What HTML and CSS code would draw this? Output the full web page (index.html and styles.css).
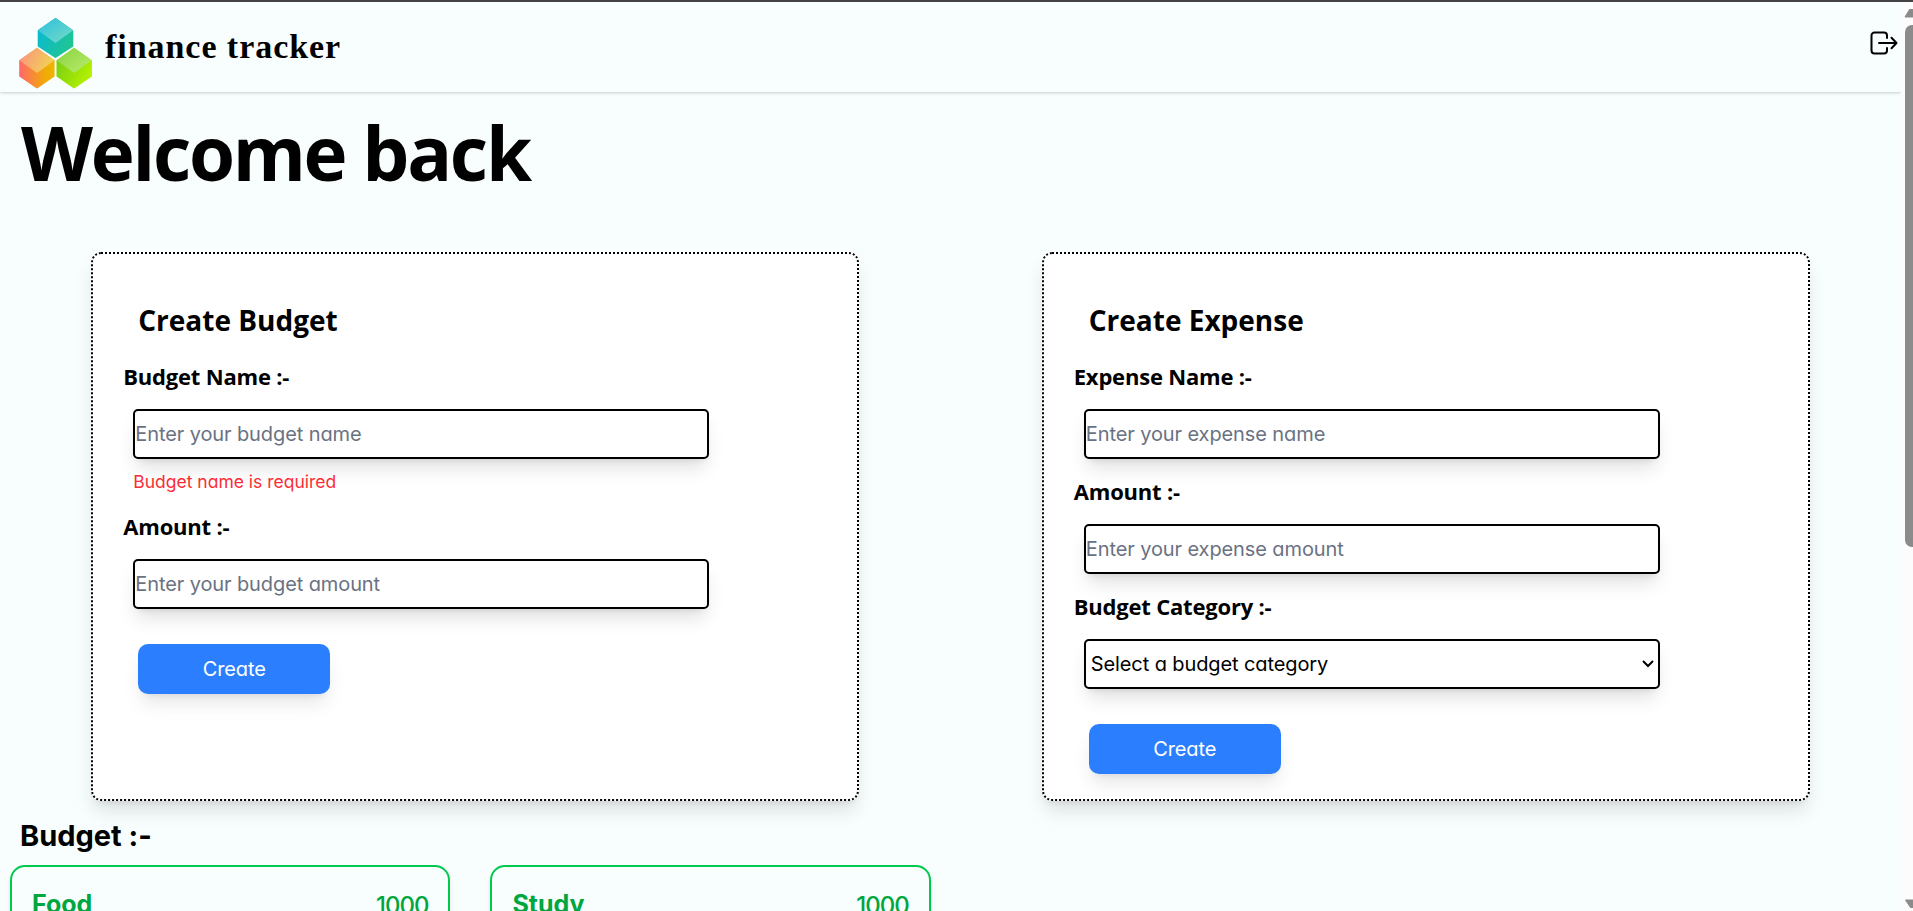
FILE: index.html
```html
<!DOCTYPE html>
<html lang="en">
<head>
<meta charset="utf-8">
<title>finance tracker</title>
<link rel="stylesheet" href="styles.css">
</head>
<body>
<div class="top-edge"></div>
<div class="viewport">
  <div class="page">
    <header class="navbar">
      <svg class="logo" viewBox="0 0 90 85" width="90" height="85">
        <defs>
          <linearGradient id="tealTop" x1="0" y1="0" x2="1" y2="1"><stop offset="0" stop-color="#2bbfe0"/><stop offset="1" stop-color="#78dcc4"/></linearGradient>
          <linearGradient id="teal" x1="0" y1="0" x2="1" y2="0.6"><stop offset="0" stop-color="#06b8dc"/><stop offset="1" stop-color="#20c593"/></linearGradient>
          <linearGradient id="orangeTop" x1="0" y1="0" x2="1" y2="0.4"><stop offset="0" stop-color="#fb8f83"/><stop offset="1" stop-color="#f2d055"/></linearGradient>
          <linearGradient id="orange" x1="0" y1="0" x2="1" y2="0"><stop offset="0" stop-color="#ff6a68"/><stop offset=".75" stop-color="#f0ab05"/><stop offset="1" stop-color="#efb400"/></linearGradient>
          <linearGradient id="limeTop" x1="0" y1="0" x2="1" y2="1"><stop offset="0" stop-color="#88d23f"/><stop offset="1" stop-color="#bced6e"/></linearGradient>
          <linearGradient id="lime" x1="0" y1="0" x2="1" y2="0.6"><stop offset="0" stop-color="#72c916"/><stop offset="1" stop-color="#b1f000"/></linearGradient>
        </defs>
        <g stroke-linejoin="round" stroke-width="2">
          <path d="M45.500 9L62.300 20.800V36L45.500 47L28.700 36V20.800Z" fill="url(#teal)" stroke="url(#teal)"/>
          <path d="M45.500 7.900L63.200 20.300L45.500 33L27.800 20.300Z" fill="url(#tealTop)"/>
          <path d="M27 39L43.600 50.800V66L27 77.300L10.200 66V50.800Z" fill="url(#orange)" stroke="url(#orange)"/>
          <path d="M27 37.900L44.500 50.300L27 63L9.300 50.300Z" fill="url(#orangeTop)"/>
          <path d="M64.100 39L80.900 50.800V66L64.100 77.300L47.500 66V50.800Z" fill="url(#lime)" stroke="url(#lime)"/>
          <path d="M64.100 37.900L81.800 50.300L64.100 63L46.600 50.300Z" fill="url(#limeTop)"/>
        </g>
      </svg>
      <span class="brand">finance tracker</span>
      <svg class="logout" viewBox="0 0 28 26" width="28" height="26" fill="none" stroke="#000" stroke-width="2" stroke-linecap="round" stroke-linejoin="round">
        <path d="M17 7V4.500a3 3 0 0 0-3-3H4.500a3 3 0 0 0-3 3v15a3 3 0 0 0 3 3h9.500a3 3 0 0 0 3-3V17"/>
        <path d="M9 12H26.500M21.500 6.800L26.500 12L21.500 17.200"/>
      </svg>
    </header>
    <h1 class="welcome">Welcome back</h1>
    <main class="forms">
      <section class="panel">
        <h2 class="panel-title">Create Budget</h2>
        <label class="label">Budget Name :-</label>
        <input class="field" placeholder="Enter your budget name">
        <p class="error">Budget name is required</p>
        <label class="label">Amount :-</label>
        <input class="field" placeholder="Enter your budget amount">
        <button class="create">Create</button>
      </section>
      <section class="panel">
        <h2 class="panel-title">Create Expense</h2>
        <label class="label">Expense Name :-</label>
        <input class="field" placeholder="Enter your expense name">
        <label class="label">Amount :-</label>
        <input class="field" placeholder="Enter your expense amount">
        <label class="label">Budget Category :-</label>
        <div class="field select">
          <span>Select a budget category</span>
          <svg width="12" height="8" viewBox="0 0 12 8" fill="none" stroke="#000" stroke-width="2"><path d="M1 1L6 6L11 1"/></svg>
        </div>
        <button class="create">Create</button>
      </section>
    </main>
    <h2 class="list-title">Budget :-</h2>
    <div class="budgets">
      <article class="budget"><span class="budget-name">Food</span><span class="budget-sum">1000</span></article>
      <article class="budget"><span class="budget-name">Study</span><span class="budget-sum">1000</span></article>
    </div>
  </div>
  <div class="scrollbar">
    <svg width="12" height="18" viewBox="0 0 12 18"><path d="M4 15L8.500 7.500H12V15Z" fill="#8b8b8b" stroke="#8b8b8b" stroke-linejoin="round"/></svg>
    <div class="thumb"></div>
    <svg class="down" width="12" height="12" viewBox="0 0 12 12"><path d="M4.500 1H12V8.500H9.500Z" fill="#8b8b8b" stroke="#8b8b8b" stroke-linejoin="round"/></svg>
  </div>
</div>
</body>
</html>
```
FILE: styles.css
```css
* { box-sizing: border-box; margin: 0; padding: 0; }
body {
  height: 911px;
  overflow: hidden;
  background: #f8fdfd;
  color: #000;
  font-family: Inter, sans-serif;
  font-feature-settings: "cv11";
}
.top-edge { height: 2px; background: #444; }
.viewport { display: flex; height: 909px; overflow: hidden; }
.page { width: 1901px; height: 909px; overflow: hidden; }
.navbar {
  display: flex;
  align-items: flex-start;
  height: 90px;
  padding: 8px 1px 0 10px;
  box-shadow: 0 1px 4px rgba(0,0,0,.1), 0 1px 2px rgba(0,0,0,.1);
}
.logo { flex: none; display: block; }
.brand {
  margin: 17px 0 0 5px;
  font: bold 34px/40px "Liberation Serif", serif;
  letter-spacing: .95px;
}
.logout { margin: 21px 2px 0 auto; }
.welcome {
  height: 160px;
  padding: 10px 0 0 21px;
  font: bold 74.5px/100px "Open Sans", sans-serif;
  letter-spacing: -2.3px;
}
.forms { display: grid; grid-template-columns: 1fr 1fr; justify-items: center; height: 550px; }
.panel {
  display: flex;
  flex-direction: column;
  align-items: flex-start;
  width: 768px;
  height: 549px;
  padding: 44px 30px 0;
  background: #fff;
  border: 2px dotted #000;
  border-radius: 10px;
  box-shadow: 0 12.5px 18.75px -3.75px rgba(0,0,0,.12), 0 5px 7.5px -5px rgba(0,0,0,.12);
}
.panel-title { height: 46px; margin-left: 15px; font: bold 28px/44px "Open Sans", sans-serif; }
.label { height: 65px; padding-top: 16px; font: bold 22px/32px "Open Sans", sans-serif; letter-spacing: -.2px; }
.field {
  flex: none;
  width: 576px;
  height: 50px;
  margin-left: 10px;
  background: #fff;
  border: 2px solid #000;
  border-radius: 5px;
  color: #000;
  font: 20px Inter, sans-serif;
  font-feature-settings: "cv11";
  letter-spacing: -.1px;
  box-shadow: 0 12.5px 18.75px -3.75px rgba(0,0,0,.12), 0 5px 7.5px -5px rgba(0,0,0,.12);
}
.field::placeholder { color: #6a7282; opacity: 1; }
.select { display: flex; align-items: center; justify-content: space-between; padding: 0 4px 0 5px; }
.error { height: 35px; padding: 9px 0 0 10px; color: #fb2c36; font-size: 17.5px; line-height: 28px; }
.create {
  width: 192px;
  height: 50px;
  margin: 35px 0 0 15px;
  background: #2b7fff;
  border: 0;
  border-radius: 10px;
  color: #fff;
  font: 20px Inter, sans-serif;
  font-feature-settings: "cv11";
  letter-spacing: -.1px;
  box-shadow: 0 12.5px 18.75px -3.75px rgba(0,0,0,.1), 0 5px 7.5px -5px rgba(0,0,0,.1);
}
.list-title { height: 63px; padding: 14px 0 0 20px; font-size: 29px; line-height: 40px; font-weight: 700; }
.budgets { display: flex; gap: 40px; padding-left: 10px; }
.budget {
  display: flex;
  flex: none;
  justify-content: space-between;
  align-items: flex-start;
  width: 440.4px;
  height: 120px;
  padding: 20px;
  border: 2px solid #00c950;
  border-radius: 15px;
  color: #00a63e;
  font-size: 25px;
  line-height: 35px;
  box-shadow: 0 4px 6px -1px rgba(0,0,0,.1);
}
.budget-name { font-weight: 700; }
.budget-sum { padding-top: 1px; font-size: 24px; font-weight: 500; letter-spacing: -1px; }
.scrollbar { display: flex; flex-direction: column; width: 12px; background: #fcfcfc; }
.scrollbar svg { flex: none; display: block; }
.thumb { width: 8px; height: 522px; margin: 5px 0 0 4px; border-radius: 7px 0 0 7px; background: #8b8b8b; }
.down { margin-top: auto; }
```
